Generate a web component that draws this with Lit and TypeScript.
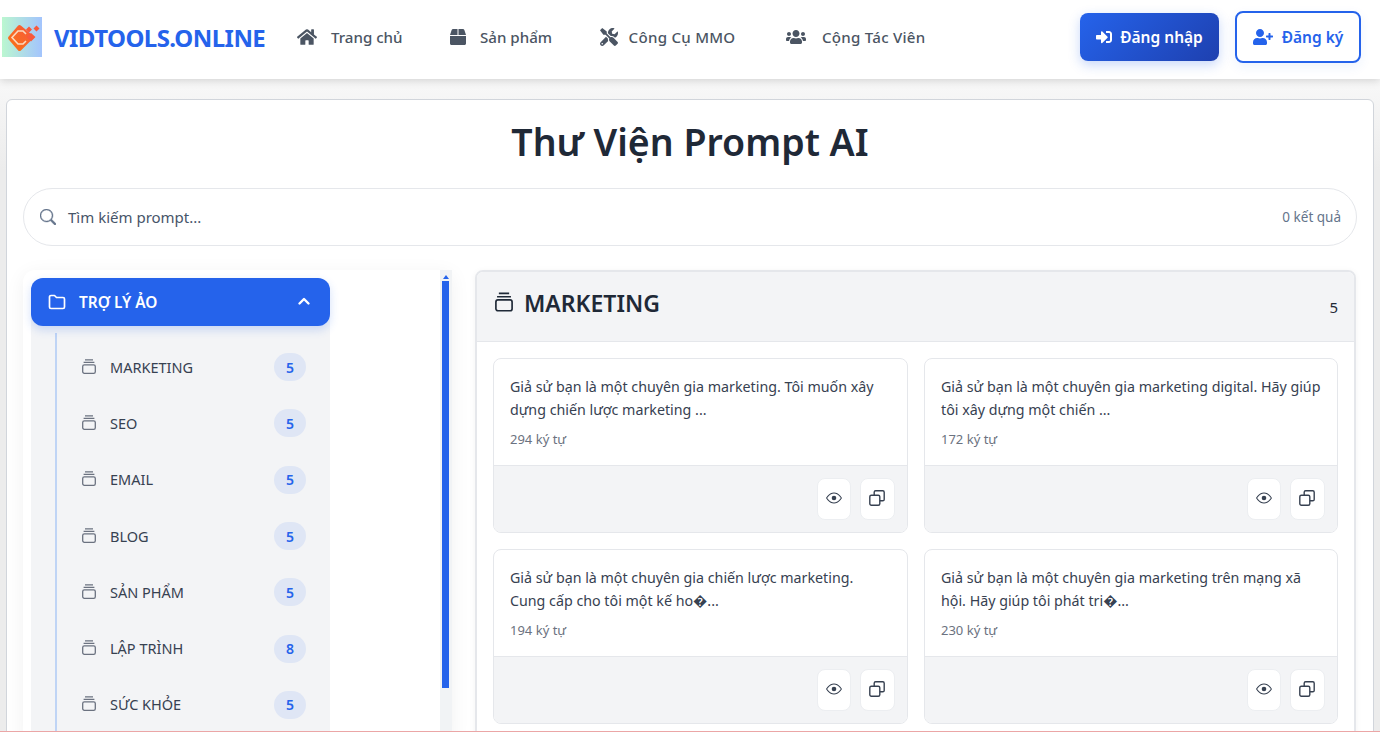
import { LitElement, html, css, svg } from 'lit';
import { customElement } from 'lit/decorators.js';

// ── Icons ─────────────────────────────────────────────────────────────────────

const HOME = 'M280.37 148.26L96 300.11V464a16 16 0 0 0 16 16l112.06-.29a16 16 0 0 0 15.92-16V368a16 16 0 0 1 16-16h64a16 16 0 0 1 16 16v95.64a16 16 0 0 0 16 16.05L464 480a16 16 0 0 0 16-16V300L295.67 148.26a12.19 12.19 0 0 0-15.3 0zM571.6 251.47L488 182.56V44.05a12 12 0 0 0-12-12h-56a12 12 0 0 0-12 12v72.61L318.47 43a48 48 0 0 0-61 0L4.34 251.47a12 12 0 0 0-1.6 16.9l25.5 31A12 12 0 0 0 45.15 301l235.22-193.74a12.19 12.19 0 0 1 15.3 0L530.9 301a12 12 0 0 0 16.9-1.6l25.5-31a12 12 0 0 0-1.7-16.93z';
const BOX = 'M509.5 184.6L458.9 32.8C452.4 13.2 434.1 0 413.4 0H272v192h238.7c-.4-2.5-.4-5-1.2-7.4zM240 0H98.6c-20.7 0-39 13.2-45.5 32.8L2.5 184.6c-.8 2.4-.8 4.9-1.2 7.4H240V0zM0 224v240c0 26.5 21.5 48 48 48h416c26.5 0 48-21.5 48-48V224H0z';
const TOOLS = 'M501.1 395.7L384 278.6c-23.1-23.1-57.6-27.6-85.4-13.9L192 158.1V96L64 0 0 64l96 128h62.1l106.6 106.6c-13.6 27.8-9.2 62.3 13.9 85.4l117.1 117.1c14.6 14.6 38.2 14.6 52.7 0l52.7-52.7c14.5-14.6 14.5-38.2 0-52.7zM331.7 225c28.3 0 54.9 11 74.9 31l19.4 19.4c15.8-6.9 30.8-16.5 43.8-29.5 37.1-37.1 49.7-89.3 37.9-136.7-2.2-9-13.5-12.1-20.1-5.5l-74.4 74.4-67.9-11.3L334 98.9l74.4-74.4c6.6-6.6 3.4-17.9-5.7-20.2-47.4-11.7-99.6.9-136.6 37.9-28.5 28.5-41.9 66.1-41.2 103.6l82.1 82.1c8.1-1.9 16.5-2.9 24.7-2.9zm-103.9 82l-56.7-56.7L18.7 402.8c-25 25-25 65.5 0 90.5s65.5 25 90.5 0l123.6-123.6c-7.6-19.9-9.9-41.6-5-62.7zM64 472c-13.2 0-24-10.8-24-24 0-13.3 10.7-24 24-24s24 10.7 24 24c0 13.2-10.7 24-24 24z';
const USERS = 'M96 224c35.3 0 64-28.7 64-64s-28.7-64-64-64-64 28.7-64 64 28.7 64 64 64zm448 0c35.3 0 64-28.7 64-64s-28.7-64-64-64-64 28.7-64 64 28.7 64 64 64zm32 32h-64c-17.6 0-33.5 7.1-45.1 18.6 40.3 22.1 68.9 62 75.1 109.4h66c17.7 0 32-14.3 32-32v-32c0-35.3-28.7-64-64-64zm-256 0c61.9 0 112-50.1 112-112S381.9 32 320 32 208 82.1 208 144s50.1 112 112 112zm76.8 32h-8.3c-20.8 10-43.9 16-68.5 16s-47.6-6-68.5-16h-8.3C179.6 288 128 339.6 128 403.2V432c0 26.5 21.5 48 48 48h288c26.5 0 48-21.5 48-48v-28.8c0-63.6-51.6-115.2-115.2-115.2zm-223.7-13.4C161.5 263.1 145.6 256 128 256H64c-35.3 0-64 28.7-64 64v32c0 17.7 14.3 32 32 32h65.9c6.3-47.4 34.9-87.3 75.2-109.4z';
const SIGN_IN = 'M416 448h-84c-6.6 0-12-5.4-12-12v-40c0-6.6 5.4-12 12-12h84c17.7 0 32-14.3 32-32V160c0-17.7-14.3-32-32-32h-84c-6.6 0-12-5.4-12-12V76c0-6.6 5.4-12 12-12h84c53 0 96 43 96 96v192c0 53-43 96-96 96zm-47-201L201 79c-15-15-41-4.5-41 17v96H24c-13.3 0-24 10.7-24 24v96c0 13.3 10.7 24 24 24h136v96c0 21.5 26 32 41 17l168-168c9.3-9.4 9.3-24.6 0-34z';
const USER_PLUS = 'M624 208h-64v-64c0-8.8-7.2-16-16-16h-32c-8.8 0-16 7.2-16 16v64h-64c-8.8 0-16 7.2-16 16v32c0 8.8 7.2 16 16 16h64v64c0 8.8 7.2 16 16 16h32c8.8 0 16-7.2 16-16v-64h64c8.8 0 16-7.2 16-16v-32c0-8.8-7.2-16-16-16zm-400 48c70.7 0 128-57.3 128-128S294.7 0 224 0 96 57.3 96 128s57.3 128 128 128zm89.6 32h-16.7c-22.2 10.2-46.9 16-72.9 16s-50.6-5.8-72.9-16h-16.7C60.2 288 0 348.2 0 422.4V464c0 26.5 21.5 48 48 48h352c26.5 0 48-21.5 48-48v-41.6c0-74.2-60.2-134.4-134.4-134.4z';
const SEARCH = 'M11.742 10.344a6.5 6.5 0 1 0-1.397 1.398h-.001c.03.04.062.078.098.115l3.85 3.85a1 1 0 0 0 1.415-1.414l-3.85-3.85a1.007 1.007 0 0 0-.115-.1zM12 6.5a5.5 5.5 0 1 1-11 0 5.5 5.5 0 0 1 11 0z';
const EYE = 'M16 8s-3-5.5-8-5.5S0 8 0 8s3 5.5 8 5.5S16 8 16 8zM1.173 8a13.133 13.133 0 0 1 1.66-2.043C4.12 4.668 5.88 3.5 8 3.5c2.12 0 3.879 1.168 5.168 2.457A13.133 13.133 0 0 1 14.828 8c-.058.087-.122.183-.195.288-.335.48-.83 1.12-1.465 1.755C11.879 11.332 10.119 12.5 8 12.5c-2.12 0-3.879-1.168-5.168-2.457A13.134 13.134 0 0 1 1.172 8z';

const icon = (d: string, box: string, cls = '') =>
  html`<svg class=${cls} viewBox=${box} fill="currentColor" aria-hidden="true">${svg`<path d=${d}></path>`}</svg>`;

// stacked cards: two short bars over an outlined box
const collectionIcon = () => html`
  <svg class="collection" viewBox="0 0 14 15" fill="none" stroke="currentColor" stroke-width="1.3" aria-hidden="true">
    <path d="M3 .8h8M1.6 3.4h10.8"></path>
    <rect x=".7" y="5.9" width="12.6" height="8.4" rx="1.6"></rect>
  </svg>
`;

const FA = '0 0 512 512';
const FA_WIDE = '0 0 640 512';
const BI = '0 0 16 16';

// ── Data ──────────────────────────────────────────────────────────────────────

const NAV = [
  { label: 'Trang chủ', d: HOME, box: '0 0 576 512', cls: 'i-home' },
  { label: 'Sản phẩm', d: BOX, box: FA, cls: 'i-box' },
  { label: 'Công Cụ MMO', d: TOOLS, box: FA, cls: 'i-tools' },
  { label: 'Cộng Tác Viên', d: USERS, box: FA_WIDE, cls: 'i-users' },
];

const CATEGORIES = [
  ['MARKETING', 5],
  ['SEO', 5],
  ['EMAIL', 5],
  ['BLOG', 5],
  ['SẢN PHẨM', 5],
  ['LẬP TRÌNH', 8],
  ['SỨC KHỎE', 5],
] as const;

const PROMPTS = [
  { text: 'Giả sử bạn là một chuyên gia marketing. Tôi muốn xây dựng chiến lược marketing ...', len: 294 },
  { text: 'Giả sử bạn là một chuyên gia marketing digital. Hãy giúp tôi xây dựng một chiến ...', len: 172 },
  { text: 'Giả sử bạn là một chuyên gia chiến lược marketing. Cung cấp cho tôi một kế ho�...', len: 194 },
  { text: 'Giả sử bạn là một chuyên gia marketing trên mạng xã hội. Hãy giúp tôi phát tri�...', len: 230 },
];

// ── AppRoot ───────────────────────────────────────────────────────────────────

@customElement('app-root')
export class AppRoot extends LitElement {
  static styles = css`
    :host {
      display: block;
      box-sizing: border-box;
      height: 732px;
      overflow: hidden;
      border-bottom: 1px solid #eba6a6;
      background: linear-gradient(180deg, #f8f8f8 80px, #ececec 170px);
      color: #1f2937;
      font-family: 'Noto Sans', 'Open Sans', sans-serif;
      font-size: 14px;
    }

    svg {
      display: block;
      flex: none;
    }

    .topbar {
      position: relative;
      z-index: 2;
      height: 79px;
      display: flex;
      align-items: center;
      padding: 0 19px 0 2px;
      background: #fff;
      box-shadow: 0 2px 8px rgba(0, 0, 0, 0.15);
    }

    .brand {
      display: flex;
      align-items: center;
      gap: 12px;
      width: 295px;
      margin-top: -5px;
    }

    .logo {
      width: 40px;
      height: 40px;
    }

    .brand-name {
      font-size: 24px;
      font-weight: 700;
      letter-spacing: -0.55px;
      color: #2563eb;
      white-space: nowrap;
    }

    .nav {
      display: flex;
      gap: 47.5px;
      flex: 1;
      margin-top: -6px;
      color: #4b5563;
      font-size: 15.1px;
      font-weight: 500;
    }

    .nav-item {
      display: flex;
      align-items: center;
      gap: 14px;
      white-space: nowrap;
    }

    .nav-item:nth-child(n + 3) {
      letter-spacing: 0.25px;
    }

    .nav-item:nth-child(3) {
      margin-right: 3px;
    }

    .i-home { width: 20px; height: 18px; }
    .i-box { width: 16px; height: 16px; }
    .i-tools { width: 18px; height: 18px; margin-right: -3px; }
    .i-users { width: 20px; height: 16px; margin-right: 2px; }

    .auth {
      display: flex;
      align-items: center;
      gap: 16px;
      margin-top: -5px;
    }

    .btn {
      display: flex;
      align-items: center;
      justify-content: center;
      box-sizing: border-box;
      font-size: 15.5px;
      font-weight: 600;
      white-space: nowrap;
    }

    .btn-login {
      gap: 8px;
      width: 139px;
      height: 48px;
      border-radius: 8px;
      color: #fff;
      background: linear-gradient(135deg, #2563eb, #1e40af);
      box-shadow: 0 4px 12px rgba(37, 99, 235, 0.25);
    }

    .btn-login svg {
      width: 16px;
      height: 16px;
    }

    .btn-register {
      gap: 9px;
      width: 126px;
      height: 52px;
      border: 2px solid #2563eb;
      border-radius: 8px;
      color: #2563eb;
      background: #fff;
      box-shadow: 0 4px 12px rgba(37, 99, 235, 0.08);
    }

    .btn-register svg {
      width: 20px;
      height: 16px;
    }

    .page {
      padding: 20px 6px 0;
    }

    .shell {
      box-sizing: border-box;
      height: 660px;
      padding: 0 16px;
      background: #fff;
      border: 1px solid #d1d5db;
      border-radius: 6px;
    }

    h1 {
      margin: 0;
      padding-top: 12px;
      height: 75px;
      box-sizing: border-box;
      text-align: center;
      font-size: 37.5px;
      line-height: 60px;
      font-weight: 600;
      color: #1f2937;
    }

    .search {
      box-sizing: border-box;
      height: 58px;
      margin: 13px 0 24px;
      display: flex;
      align-items: center;
      gap: 12px;
      padding: 0 15px 0 16px;
      border: 1px solid #e5e7eb;
      border-radius: 29px;
      color: #475569;
    }

    .search svg {
      width: 16px;
      height: 16px;
      color: #64748b;
      stroke: currentColor;
      stroke-width: 0.4;
    }

    .search-hint {
      flex: 1;
      font-size: 15px;
    }

    .search-count {
      font-size: 13.5px;
      color: #64748b;
    }

    .columns {
      display: grid;
      grid-template-columns: 429px 881px;
      gap: 23px;
    }

    .sidebar {
      height: 470px;
      display: flex;
      background: #fff;
      border-radius: 12px 0 0 0;
      box-shadow: 0 4px 20px rgba(0, 0, 0, 0.06);
      overflow: hidden;
    }

    .tree {
      flex: 1;
      padding: 8px 0 0 8px;
    }

    .group {
      width: 299px;
      background: #f3f4f6;
      border-radius: 12px 12px 0 0;
    }

    .group-head {
      position: relative;
      height: 48px;
      display: flex;
      align-items: center;
      gap: 13px;
      padding: 0 18px 0 17px;
      color: #fff;
      font-size: 15.4px;
      font-weight: 600;
      background: #2563eb;
      border-radius: 12px;
      box-shadow: 0 4px 10px rgba(37, 99, 235, 0.2);
    }

    .folder {
      width: 18px;
      height: 16px;
    }

    .group-name {
      flex: 1;
    }

    .chevron {
      width: 16px;
      height: 16px;
    }

    .cat-list {
      margin: 7px 0 0 24px;
      border-left: 2px solid #bfd4f5;
      padding-top: 6px;
    }

    .cat {
      height: 56.3px;
      display: flex;
      align-items: center;
      padding: 0 24px 0 25px;
      color: #374151;
      font-size: 14.5px;
    }

    .cat .collection {
      width: 14px;
      height: 15px;
      margin: -2px 14px 0 0;
      color: #6b7280;
    }

    .cat-name {
      flex: 1;
      margin-top: -1px;
    }

    .cat-count {
      width: 32px;
      height: 28px;
      display: flex;
      align-items: center;
      justify-content: center;
      border-radius: 14px;
      font-size: 14px;
      font-weight: 600;
      color: #2563eb;
      background: #dfe6f5;
    }

    .scrollbar {
      position: relative;
      width: 12px;
      background: #f1f3f5;
    }

    .scroll-arrow {
      position: absolute;
      top: 5px;
      left: 3px;
      width: 0;
      height: 0;
      border: solid transparent;
      border-width: 0 3px 4px;
      border-bottom-color: #2563eb;
    }

    .scroll-thumb {
      position: absolute;
      top: 11px;
      left: 2px;
      width: 7px;
      height: 407px;
      background: #2563eb;
    }

    .panel {
      border: 2px solid #e5e7eb;
      border-radius: 8px;
      height: 600px;
      box-sizing: border-box;
      box-shadow: 0 1px 6px rgba(0, 0, 0, 0.05);
      overflow: hidden;
    }

    .panel-head {
      box-sizing: border-box;
      height: 70px;
      display: flex;
      align-items: center;
      padding: 0 16px 8px 18px;
      background: #f3f4f6;
      border-bottom: 1px solid #e5e7eb;
    }

    .panel-head .collection {
      width: 18px;
      height: 20px;
      margin: -2px 11px 0 0;
      color: #1f2937;
    }

    h2 {
      flex: 1;
      margin: 0;
      font-size: 23px;
      font-weight: 600;
      color: #1f2937;
    }

    .panel-count {
      margin-top: 8px;
      font-size: 15px;
      color: #1f2937;
    }

    .cards {
      display: grid;
      grid-template-columns: 415px 414px;
      gap: 16px;
      padding: 16px;
    }

    .card {
      height: 175px;
      display: flex;
      flex-direction: column;
      box-sizing: border-box;
      border: 1px solid #e5e7eb;
      border-radius: 8px;
      overflow: hidden;
    }

    .card-body {
      flex: 1;
      padding: 16px;
    }

    .card-text {
      margin: 0;
      max-width: 380.5px;
      font-size: 14.25px;
      line-height: 23px;
      color: #374151;
    }

    .card-len {
      margin-top: 9px;
      font-size: 13px;
      color: #6b7280;
    }

    .card-foot {
      height: 67px;
      box-sizing: border-box;
      display: flex;
      justify-content: flex-end;
      align-items: center;
      gap: 9px;
      padding: 0 12.5px;
      background: #f3f4f6;
      border-top: 1px solid #e5e7eb;
    }

    .icon-btn {
      width: 34.5px;
      height: 42px;
      display: flex;
      align-items: center;
      justify-content: center;
      background: #fff;
      border: 1px solid #eceef1;
      border-radius: 8px;
      color: #374151;
      box-sizing: border-box;
    }

    .icon-btn svg {
      width: 16px;
      height: 16px;
      margin-bottom: 3px;
    }
  `;

  private renderLogo() {
    return html`
      <svg class="logo" viewBox="0 0 40 40" aria-hidden="true">
        <defs>
          <linearGradient id="logo-bg" x1="0" x2="1" y1="0" y2="0">
            <stop offset="0" stop-color="#bbf7d0"></stop>
            <stop offset="1" stop-color="#a3c4fd"></stop>
          </linearGradient>
          <linearGradient id="logo-mark" x1="0" x2="1" y1="1" y2="0">
            <stop offset="0" stop-color="#f97316"></stop>
            <stop offset="1" stop-color="#f8593b"></stop>
          </linearGradient>
        </defs>
        <rect width="40" height="40" fill="url(#logo-bg)"></rect>
        <path d="M17.5 10l12 10-12 12L8 21z" fill="url(#logo-mark)" stroke="url(#logo-mark)" stroke-width="4" stroke-linejoin="round"></path>
        <path d="M24 17l-3-3h-5l-6 6.5 6 6.5h5l3-3" fill="none" stroke="#fcd9bd" stroke-width="1.6"></path>
        <path d="M27 9.5l3 3-3 3-3-3zM34.5 8.5l3 3-3 3-3-3zM29 16l4.5 4-4.5 4.5-4.5-4.5z" fill="#f8593b"></path>
      </svg>
    `;
  }

  render() {
    return html`
      <header class="topbar">
        <div class="brand">
          ${this.renderLogo()}
          <span class="brand-name">VIDTOOLS.ONLINE</span>
        </div>
        <nav class="nav">
          ${NAV.map(
            (n) => html`<div class="nav-item">${icon(n.d, n.box, n.cls)}<span>${n.label}</span></div>`,
          )}
        </nav>
        <div class="auth">
          <div class="btn btn-login">${icon(SIGN_IN, FA)}Đăng nhập</div>
          <div class="btn btn-register">${icon(USER_PLUS, FA_WIDE)}Đăng ký</div>
        </div>
      </header>

      <div class="page">
        <main class="shell">
          <h1>Thư Viện Prompt AI</h1>

          <div class="search">
            ${icon(SEARCH, BI)}
            <span class="search-hint">Tìm kiếm prompt...</span>
            <span class="search-count">0 kết quả</span>
          </div>

          <div class="columns">
            <aside class="sidebar">
              <div class="tree">
                <div class="group">
                  <div class="group-head">
                    <svg class="folder" viewBox="0 0 18 16" fill="none" stroke="currentColor" stroke-width="1.7" stroke-linejoin="round" aria-hidden="true">
                      <path d="M1.5 3A1.5 1.5 0 0 1 3 1.5h3.5l2 2H15A1.5 1.5 0 0 1 16.5 5v8a1.5 1.5 0 0 1-1.5 1.5H3A1.5 1.5 0 0 1 1.5 13z"></path>
                    </svg>
                    <span class="group-name">TRỢ LÝ ẢO</span>
                    <svg class="chevron" viewBox="0 0 16 16" fill="none" stroke="currentColor" stroke-width="2.4" stroke-linecap="round" stroke-linejoin="round" aria-hidden="true">
                      <path d="M3.5 9.5L8 5l4.5 4.5"></path>
                    </svg>
                  </div>
                  <div class="cat-list">
                    ${CATEGORIES.map(
                      ([name, count]) => html`
                        <div class="cat">
                          ${collectionIcon()}
                          <span class="cat-name">${name}</span>
                          <span class="cat-count">${count}</span>
                        </div>
                      `,
                    )}
                  </div>
                </div>
              </div>
              <div class="scrollbar">
                <div class="scroll-arrow"></div>
                <div class="scroll-thumb"></div>
              </div>
            </aside>

            <section class="panel">
              <div class="panel-head">
                ${collectionIcon()}
                <h2>MARKETING</h2>
                <span class="panel-count">5</span>
              </div>
              <div class="cards">
                ${PROMPTS.map(
                  (p) => html`
                    <article class="card">
                      <div class="card-body">
                        <p class="card-text">${p.text}</p>
                        <div class="card-len">${p.len} ký tự</div>
                      </div>
                      <div class="card-foot">
                        <div class="icon-btn">
                          <svg viewBox="0 0 16 16" fill="currentColor" aria-hidden="true">
                            <path d=${EYE}></path>
                            <circle cx="8" cy="8" r="2.3"></circle>
                          </svg>
                        </div>
                        <div class="icon-btn">
                          <svg viewBox="0 0 16 16" fill="none" stroke="currentColor" stroke-width="1.4" aria-hidden="true">
                            <rect x=".8" y="5.2" width="10" height="10" rx="1.5"></rect>
                            <path d="M5.2 5.2v-3A1.4 1.4 0 0 1 6.6.8h7.2a1.4 1.4 0 0 1 1.4 1.4v7.2a1.4 1.4 0 0 1-1.4 1.4h-3"></path>
                          </svg>
                        </div>
                      </div>
                    </article>
                  `,
                )}
              </div>
            </section>
          </div>
        </main>
      </div>
    `;
  }
}

declare global {
  interface HTMLElementTagNameMap {
    'app-root': AppRoot;
  }
}
